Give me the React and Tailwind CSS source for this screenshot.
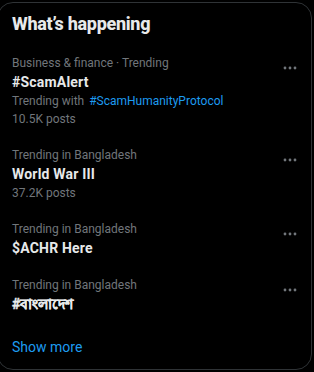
import React from "react";

const trends = [
  {
    meta: "Business & finance · Trending",
    title: "#ScamAlert",
    withTag: "#ScamHumanityProtocol",
    posts: "10.5K posts",
  },
  { meta: "Trending in Bangladesh", title: "World War III", posts: "37.2K posts" },
  { meta: "Trending in Bangladesh", title: "$ACHR Here" },
  { meta: "Trending in Bangladesh", title: "#বাংলাদেশ", bangla: true },
];

const Dots = () => (
  <svg width="18" height="18" viewBox="0 0 18 18" className="text-[#71767b]">
    <circle cx="4" cy="9" r="1.4" fill="currentColor" />
    <circle cx="9" cy="9" r="1.4" fill="currentColor" />
    <circle cx="14" cy="9" r="1.4" fill="currentColor" />
  </svg>
);

const App = () => {
  return (
    <div
      className="w-[314px] h-[372px] bg-black overflow-hidden"
      style={{ fontFamily: '"Segoe UI", Roboto, "Noto Sans", sans-serif' }}
    >
      <div className="-ml-[3px] mt-[2px] w-[315px] border border-[#2f3336] rounded-[16px] bg-black">
        <h2 className="pl-[14px] pt-[9px] text-[18px] leading-[24px] tracking-[-0.3px] font-extrabold text-[#e7e9ea]">
          What’s happening
        </h2>
        <div className="mt-[9px]">
          {trends.map((t, i) => (
            <div key={i} className="flex justify-between pl-[14px] pr-[12px] py-[9px]">
              <div className="flex flex-col">
                <span className="text-[12px] leading-[18px] text-[#71767b]">{t.meta}</span>
                <span
                  className={
                    t.bangla
                      ? "text-[14px] leading-[20px] font-bold text-[#e7e9ea] [-webkit-text-stroke:0.4px_#e7e9ea]"
                      : "text-[14px] leading-[20px] tracking-[0.2px] font-bold text-[#e7e9ea]"
                  }
                >
                  {t.title}
                </span>
                {t.withTag && (
                  <span className="text-[12px] leading-[18px] text-[#71767b]">
                    Trending with <span className="text-[#1d9bf0] ml-[2px]">{t.withTag}</span>
                  </span>
                )}
                {t.posts && (
                  <span className="text-[12px] leading-[18px] text-[#71767b]">{t.posts}</span>
                )}
              </div>
              <div className="mt-[5px]">
                <Dots />
              </div>
            </div>
          ))}
        </div>
        <div className="pl-[14px] pt-[15px] pb-[13px] text-[14px] leading-[18px] text-[#1d9bf0]">
          Show more
        </div>
      </div>
    </div>
  );
};

export default App;
